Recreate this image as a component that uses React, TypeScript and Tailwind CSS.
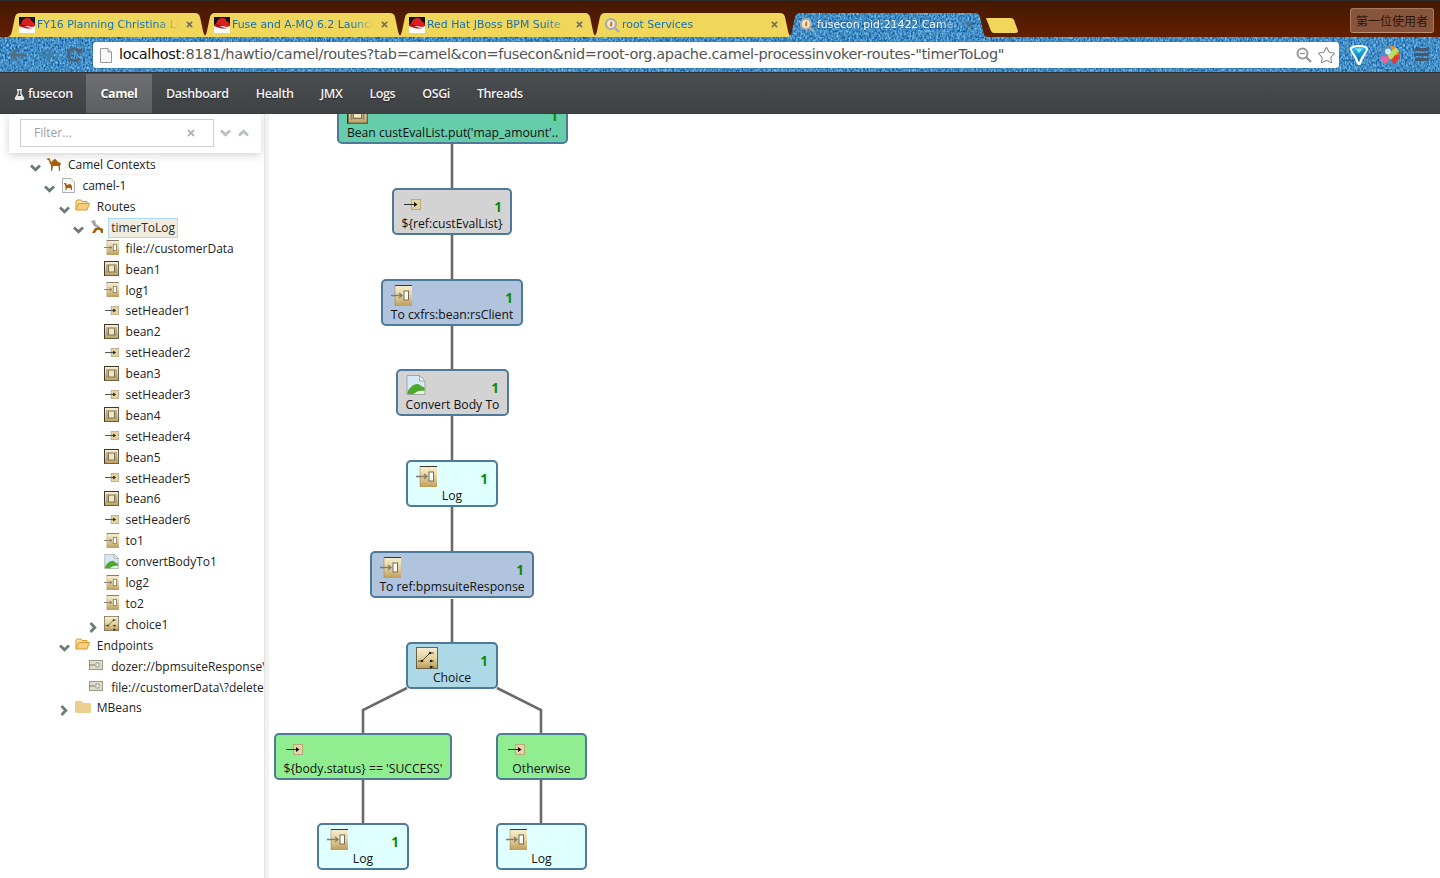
import { Star } from 'lucide-react'
import { FaFlask, FaFolder, FaTimes } from 'react-icons/fa'

// Shared gradient and texture defs, referenced by the icons below
function SharedDefs() {
  return (
    <svg className="absolute h-0 w-0">
      <defs>
        <linearGradient id="tan" x1="0" y1="0" x2="0" y2="1">
          <stop offset="0" stopColor="#f8f0d4" />
          <stop offset="0.55" stopColor="#e2cf98" />
          <stop offset="1" stopColor="#bd9c5a" />
        </linearGradient>
        <linearGradient id="jewel" x1="0" y1="0" x2="0" y2="1">
          <stop offset="0" stopColor="#25c4f2" />
          <stop offset="1" stopColor="#0a5fa6" />
        </linearGradient>
        <filter id="denim" x="0" y="0" width="100%" height="100%" colorInterpolationFilters="sRGB">
          <feTurbulence type="fractalNoise" baseFrequency="0.55 0.4" numOctaves="2" seed="4" />
          <feColorMatrix values="0.8 0 0 0 -0.14  0.7 0 0 0 0.2  0.5 0 0 0 0.52  0 0 0 0 1" />
        </filter>
      </defs>
    </svg>
  )
}

function Chevron({ dir, className = '' }: { dir: 'down' | 'right' | 'up'; className?: string }) {
  if (dir === 'right') {
    return (
      <svg width="8" height="11" viewBox="0 0 8 11" className={`shrink-0 ${className}`}>
        <path d="M1.500 1 L5.800 5.500 L1.500 10" fill="none" stroke="currentColor" strokeWidth="2.800" />
      </svg>
    )
  }
  return (
    <svg width="11" height="8" viewBox="0 0 11 8" className={`shrink-0 ${className}`}>
      <path d={dir === 'down' ? 'M1 1.500 L5.500 5.800 L10 1.500' : 'M1 6.500 L5.500 2.200 L10 6.500'} fill="none" stroke="currentColor" strokeWidth="2.800" />
    </svg>
  )
}

function RedHatFavicon() {
  return (
    <svg width="16" height="16" viewBox="0 0 16 16" className="shrink-0">
      <rect width="16" height="16" fill="#fff" />
      <rect width="16" height="9" fill="#111" />
      <path d="M2 7 C3 3 5 1 8 1 C11 1 12 2 12.500 4 C14 5 16 6 16 8 C16 10 13 10.500 10 9.500 C7 8.500 3 8 2 7 Z" fill="#dd1e1e" />
      <path d="M0 8 C1 6.500 2 7 3 8 C6 9.500 10 11 13 11 C10 12.500 4 11 0 9 Z" fill="#c01818" />
    </svg>
  )
}

function SearchFavicon() {
  return (
    <svg width="16" height="16" viewBox="0 0 16 16" className="shrink-0">
      <circle cx="7" cy="7" r="5" fill="#f3e9d8" stroke="#aaa" strokeWidth="2.200" />
      <path d="M11 11 L15 15" stroke="#aaa" strokeWidth="2.400" />
      <path d="M7.500 3.800 C8.500 6 9 7 7.500 9.800 C5.500 9.500 5 7.500 7.500 3.800 Z" fill="#e8741c" />
    </svg>
  )
}

function Tab({ title, favicon, active }: { title: string; favicon: 'hat' | 'search'; active?: boolean }) {
  const shape = 'M0 24 C4 24 5 22 6 18 L9 4 Q10 0 14 0 L189 0 Q193 0 194 4 L197 18 C198 22 199 24 203 24 Z'
  return (
    <div className="relative -ml-[8px] flex h-[24px] w-[203px] shrink-0 items-center pl-[13px] pr-[12px] first:ml-0">
      <svg viewBox="0 0 203 24" className="absolute inset-0 h-full w-full">
        {active ? (
          <>
            <clipPath id="activeTab">
              <path d={shape} />
            </clipPath>
            <rect width="203" height="24" filter="url(#denim)" clipPath="url(#activeTab)" />
          </>
        ) : (
          <path d={shape} fill="#f0d75c" />
        )}
      </svg>
      <div className="relative flex min-w-0 flex-1 items-center">
        {favicon === 'hat' ? <RedHatFavicon /> : <SearchFavicon />}
        <span
          className={`ml-[2px] min-w-0 flex-1 overflow-hidden whitespace-nowrap pt-[1px] text-[10.900px] [font-family:'DejaVu_Sans',sans-serif] [mask-image:linear-gradient(to_right,black_85%,transparent)] ${
            active ? 'text-white [text-shadow:0_0_2px_#1d5f90]' : 'text-[#1272b8]'
          }`}
        >
          {title}
        </span>
        <FaTimes size={9} className={`ml-[6px] mr-[3px] shrink-0 ${active ? 'text-[#4d6f8a]' : 'text-[#77705a]'}`} />
      </div>
    </div>
  )
}

function TabStrip() {
  return (
    <div className="flex h-[37px] items-end border-t border-[#2c2c2c] bg-gradient-to-b from-[#431800] to-[#631f00] pl-[6px]">
      <Tab title="FY16 Planning Christina Lin" favicon="hat" />
      <Tab title="Fuse and A-MQ 6.2 Launch" favicon="hat" />
      <Tab title="Red Hat JBoss BPM Suite ::" favicon="hat" />
      <Tab title="root Services" favicon="search" />
      <Tab title="fusecon pid:21422 Camel" favicon="search" active />
      <svg width="32" height="15" viewBox="0 0 32 15" className="mb-[4px] -ml-[3px] shrink-0">
        <path d="M0 0 L25 0 Q27 0 28 2 L32 13 Q32 15 29 15 L8 15 Q6 15 5 13 Z" fill="#f0d75c" />
      </svg>
      <div className="mb-[4px] ml-auto mr-[6px] flex h-[25px] w-[84px] items-center justify-center self-end rounded-[3px] border border-[#a97a62] border-b-[#c09078] bg-[#89543c] text-[12px] text-[#2a1509] [font-family:'Noto_Sans_CJK_TC',sans-serif]">
        第一位使用者
      </div>
    </div>
  )
}

function Toolbar() {
  return (
    <div className="relative flex h-[35px] items-center overflow-hidden pl-[10px]">
      <svg className="absolute inset-0 h-full w-full">
        <rect width="100%" height="100%" filter="url(#denim)" />
      </svg>
      <div className="relative flex items-center">
        <svg width="16" height="14" viewBox="0 0 16 14" className="mt-[1px]">
          <path d="M7 1.500 L2 7 L7 12.500 M2 7 L15 7" fill="none" stroke="#566d7e" strokeWidth="3" />
        </svg>
        <svg width="16" height="14" viewBox="0 0 16 14" className="ml-[12px] mt-[1px]">
          <path d="M9 1.500 L14 7 L9 12.500 M14 7 L1 7" fill="none" stroke="#3f7ea9" strokeWidth="3" />
        </svg>
        <svg width="17" height="16" viewBox="0 0 17 16" className="ml-[12px]">
          <path d="M13.500 11 A6 6 0 1 1 13 4" fill="none" stroke="#4f6475" strokeWidth="3" />
          <path d="M9.500 6.500 L16.500 6.500 L16.500 0 Z" fill="#4f6475" />
        </svg>
      </div>
      <div className="relative ml-[10px] mt-[1px] flex h-[26px] w-[1246px] items-center rounded-[3px] bg-white pl-[7px] pr-[3px] shadow-[0_0_1px_#17466a]">
        <svg width="12" height="15" viewBox="0 0 12 15" className="shrink-0">
          <path d="M0.500 0.500 L8 0.500 L11.500 4 L11.500 14.500 L0.500 14.500 Z" fill="#f7f7f7" stroke="#999" />
          <path d="M8 0.500 L8 4 L11.500 4" fill="#ddd" stroke="#999" />
        </svg>
        <span className="ml-[7px] whitespace-nowrap text-[14.500px] tracking-[-0.360px] text-[#555] [font-family:'DejaVu_Sans',sans-serif]">
          <span className="text-[#111]">localhost</span>:8181/hawtio/camel/routes?tab=camel&amp;con=fusecon&amp;nid=root-org.apache.camel-processinvoker-routes-"timerToLog"
        </span>
        <div className="ml-auto flex items-center gap-[5px]">
          <svg width="16" height="16" viewBox="0 0 16 16">
            <circle cx="6.500" cy="6.500" r="5" fill="none" stroke="#999" strokeWidth="2" />
            <path d="M4 6.500 L9 6.500" stroke="#999" strokeWidth="1.500" />
            <path d="M10.500 10.500 L15 15" stroke="#999" strokeWidth="2.400" />
          </svg>
          <Star size={19} strokeWidth={1.300} className="text-[#888]" />
        </div>
      </div>
      <div className="relative flex items-center">
        <svg width="20" height="22" viewBox="0 0 20 22" className="ml-[10px]">
          <path d="M1 5 C1 2 5 1 10 1 C15 1 19 2 19 5 C19 8 14 13 12 20 C11 21.500 9 21.500 8 20 C6 13 1 8 1 5 Z" fill="#fff" />
          <path d="M3 5.500 C3 3.500 7 3 10 3 C13 3 17 3.500 17 5.500 C16.500 8 12 12 10 18.500 C8 12 3.500 8 3 5.500 Z" fill="url(#jewel)" />
          <path d="M6 4.500 L14 4.500 L10 9 Z" fill="#8fe6fb" />
        </svg>
        <svg width="20" height="20" viewBox="0 0 20 20" className="ml-[11px]">
          <circle cx="10" cy="10" r="9.500" fill="#4f8fc4" />
          <path d="M10 0.500 A9.500 9.500 0 0 1 19.500 10 L14 10 Z" fill="#f0901e" />
          <path d="M19.500 9 A9.500 9.500 0 0 1 13 19 L11 12 Z" fill="#e03a30" />
          <path d="M8 9 L16 2.500 L18.500 5.500 L12 14 L8 14 Z" fill="#b4e068" />
          <circle cx="8" cy="6.500" r="3" fill="#cfe8f5" />
          <path d="M1 13 C1 10.500 4 10.500 5 12 C6 10.500 9 10.500 9 13 C9 16 6 18 5 19 C4 18 1 16 1 13 Z" fill="#f0609a" />
        </svg>
        <div className="ml-[15px] flex flex-col gap-[2px]">
          <span className="block h-[3px] w-[14px] rounded-[1px] bg-[#46586a]" />
          <span className="block h-[3px] w-[14px] rounded-[1px] bg-[#46586a]" />
          <span className="block h-[3px] w-[14px] rounded-[1px] bg-[#46586a]" />
        </div>
      </div>
    </div>
  )
}

function NavBar() {
  const items = ['Dashboard', 'Health', 'JMX', 'Logs', 'OSGi', 'Threads']
  return (
    <div className="flex h-[42px] items-stretch border-y border-t-[#2e3032] border-b-[#3a3c3f] bg-gradient-to-b from-[#4b4e51] to-[#3f4245] text-[12.500px] font-semibold tracking-[-0.400px] text-[#f2f2f2] [text-shadow:0_1px_1px_#222]">
      <div className="mt-[2px] flex w-[86px] items-center gap-[3px] pl-[14px]">
        <FaFlask size={11} className="text-[#e8e8e8]" />
        fusecon
      </div>
      <div className="mt-[1px] flex w-[66px] items-center justify-center bg-gradient-to-b from-[#6e7073] to-[#5c5f62] pt-[1px] font-bold text-white">Camel</div>
      <div className="mt-[2px] flex items-center gap-[27px] pl-[14px]">
        {items.map((item) => (
          <span key={item}>{item}</span>
        ))}
      </div>
    </div>
  )
}

// Tree icons

function ToIcon({ size = 15 }: { size?: number }) {
  return (
    <svg width={size} height={size} viewBox="0 0 21 21" className="shrink-0">
      <rect x="4" y="0" width="17" height="21" fill="url(#tan)" />
      <path d="M4 0.500 L21 0.500" stroke="#3d3526" />
      <path d="M4 0 L4 21" stroke="#8d7b53" strokeOpacity="0.500" />
      <path d="M0 10.500 L11 10.500 M8 8 L11 10.500 L8 13" fill="none" stroke="#857a68" strokeWidth="1.300" />
      <rect x="13" y="6" width="4.500" height="9" fill="#fff" stroke="#746a55" />
    </svg>
  )
}

function BeanIcon({ size = 15 }: { size?: number }) {
  return (
    <svg width={size} height={size} viewBox="0 0 15 15" className="shrink-0">
      <rect x="0.500" y="0.500" width="14" height="14" fill="url(#tan)" stroke="#6b6146" />
      <path d="M0.500 14.500 L0.500 0.500 L14.500 0.500" fill="none" stroke="#3d3526" />
      <rect x="4.500" y="4" width="6" height="7" fill="#efe6c4" stroke="#7d7358" />
      <path d="M3 3 L3 12 M12 3 L12 12" stroke="#8d8268" />
    </svg>
  )
}

function SmallIcon({ className = '' }: { className?: string }) {
  return (
    <svg width="17" height="11" viewBox="0 0 17 11" className={`shrink-0 ${className}`}>
      <rect x="7.500" y="0.500" width="9" height="10" fill="#e4d4a4" stroke="#b9a97f" />
      <path d="M0 5.500 L11 5.500" stroke="#333" />
      <path d="M10 3 L13.500 5.500 L10 8 Z" fill="#111" />
    </svg>
  )
}

function TreeSmallIcon() {
  return (
    <svg width="14" height="9" viewBox="0 0 17 11" className="ml-[1px] shrink-0">
      <rect x="7.500" y="0.500" width="9" height="10" fill="#e4d4a4" stroke="#b9a97f" />
      <path d="M0 5.500 L11 5.500" stroke="#555" strokeWidth="1.300" />
      <path d="M10 3 L13.500 5.500 L10 8 Z" fill="#222" />
    </svg>
  )
}

function ImageIcon({ size = 15 }: { size?: number }) {
  return (
    <svg width={size} height={size} viewBox="0 0 19 20" className="shrink-0">
      <path d="M0.500 0.500 L13 0.500 L18.500 6 L18.500 19.500 L0.500 19.500 Z" fill="#d6e8f6" stroke="#a5a5a5" />
      <path d="M13 0.500 L13 6 L18.500 6 Z" fill="#f2f2f2" stroke="#a5a5a5" />
      <path d="M1 19 L1 17 C4 11 9 8 12.500 9.500 C15 11 16 12 18 12.500 L18 19 Z" fill="#4fa82e" />
      <path d="M7 19 C10 16 14 15 18 16 L18 19 Z" fill="#e8f3de" />
    </svg>
  )
}

function ChoiceIcon({ size = 15 }: { size?: number }) {
  return (
    <svg width={size} height={size} viewBox="0 0 22 22" className="shrink-0">
      <rect x="0.500" y="0.500" width="21" height="21" fill="url(#tan)" stroke="#6b6048" />
      <path d="M2 14 L6 14 L14 6 L18 6 M14 14 L18 14 M14 20 L18 20" fill="none" stroke="#4d4636" />
      <circle cx="6" cy="14" r="1.300" fill="#222" />
      <circle cx="14" cy="6" r="1.300" fill="#222" />
      <circle cx="15" cy="14" r="1.300" fill="#222" />
      <circle cx="15" cy="20" r="1.300" fill="#222" />
    </svg>
  )
}

function CamelIcon() {
  return (
    <svg width="16" height="14" viewBox="0 0 16 14" className="shrink-0">
      <path d="M0 2 L3 1 L4 2 L5 5 C6 5 7 2 9 2 C10 2 11 4 12 5 C14 5 15 6 15 8 L14 7.500 L14 14 L13 14 L12.500 9 L7 9 L6 14 L5 14 L5 8 C3.500 7 3.500 4 2.500 3 Z" fill="#a3600e" />
    </svg>
  )
}

function ContextIcon() {
  return (
    <svg width="13" height="15" viewBox="0 0 13 15" className="ml-[2px] shrink-0">
      <path d="M0.500 0.500 L9 0.500 L12.500 4 L12.500 14.500 L0.500 14.500 Z" fill="#f8f8f8" stroke="#b0b0b0" />
      <path d="M2 5 L4 5 L5 7 C6 7 7 5.500 8 6 C9 7 10 7 10 9 L10 12 L9 12 L8.500 10 L5 10 L4.500 12 L3.500 12 L3.500 9 C3 8 3 6 2 5.500 Z" fill="#a3600e" />
    </svg>
  )
}

function RouteIcon() {
  return (
    <svg width="14" height="14" viewBox="0 0 14 14" className="ml-[1px] shrink-0">
      <path d="M1 1 L5 0 L6 4 L10 7 L8 8 L4 6 Z" fill="#a5a5a5" />
      <path d="M2 13 L5 8 L9 7 L13 9 L13 13 L11 13 L10 10 L7 10 L5 13 Z" fill="#a3600e" />
    </svg>
  )
}

function OpenFolderIcon() {
  return (
    <svg width="15" height="12" viewBox="0 0 15 12" className="mb-[2px] shrink-0">
      <path d="M1 11 L1 2 L2 1 L6 1 L7 2.500 L12 2.500 L12 4.500" fill="#f9e2a8" stroke="#d99a2a" />
      <path d="M1 11 L3.500 4.500 L14.500 4.500 L12 11 Z" fill="#f6cf7e" stroke="#d99a2a" />
    </svg>
  )
}

function EndpointIcon() {
  return (
    <svg width="14" height="10" viewBox="0 0 14 10" className="mb-[1px] shrink-0">
      <rect x="0.500" y="0.500" width="13" height="9" fill="#e3dcc4" stroke="#9b9b8c" />
      <path d="M0 5 L6 5" stroke="#777" />
      <rect x="7" y="3" width="3" height="4" fill="#fff" stroke="#777" strokeWidth="0.700" />
    </svg>
  )
}

type TreeItem = {
  label: string
  pad: string
  icon: React.ReactNode
  open?: boolean
  closed?: boolean
  selected?: boolean
  outlined?: boolean
}

const leaf = 'pl-[86.600px]'

const tree: TreeItem[] = [
  { label: 'Camel Contexts', pad: 'pl-[29px]', icon: <CamelIcon />, open: true, outlined: true },
  { label: 'camel-1', pad: 'pl-[43.400px]', icon: <ContextIcon />, open: true },
  { label: 'Routes', pad: 'pl-[57.800px]', icon: <OpenFolderIcon />, open: true },
  { label: 'timerToLog', pad: 'pl-[72.200px]', icon: <RouteIcon />, open: true, selected: true },
  { label: 'file://customerData', pad: leaf, icon: <ToIcon /> },
  { label: 'bean1', pad: leaf, icon: <BeanIcon /> },
  { label: 'log1', pad: leaf, icon: <ToIcon /> },
  { label: 'setHeader1', pad: leaf, icon: <TreeSmallIcon /> },
  { label: 'bean2', pad: leaf, icon: <BeanIcon /> },
  { label: 'setHeader2', pad: leaf, icon: <TreeSmallIcon /> },
  { label: 'bean3', pad: leaf, icon: <BeanIcon /> },
  { label: 'setHeader3', pad: leaf, icon: <TreeSmallIcon /> },
  { label: 'bean4', pad: leaf, icon: <BeanIcon /> },
  { label: 'setHeader4', pad: leaf, icon: <TreeSmallIcon /> },
  { label: 'bean5', pad: leaf, icon: <BeanIcon /> },
  { label: 'setHeader5', pad: leaf, icon: <TreeSmallIcon /> },
  { label: 'bean6', pad: leaf, icon: <BeanIcon /> },
  { label: 'setHeader6', pad: leaf, icon: <TreeSmallIcon /> },
  { label: 'to1', pad: leaf, icon: <ToIcon /> },
  { label: 'convertBodyTo1', pad: leaf, icon: <ImageIcon /> },
  { label: 'log2', pad: leaf, icon: <ToIcon /> },
  { label: 'to2', pad: leaf, icon: <ToIcon /> },
  { label: 'choice1', pad: leaf, icon: <ChoiceIcon />, closed: true },
  { label: 'Endpoints', pad: 'pl-[57.800px]', icon: <OpenFolderIcon />, open: true },
  { label: 'dozer://bpmsuiteResponse\\?mappingFile=transformation.xml', pad: 'pl-[72.200px]', icon: <EndpointIcon /> },
  { label: 'file://customerData\\?delete=true', pad: 'pl-[72.200px]', icon: <EndpointIcon /> },
  { label: 'MBeans', pad: 'pl-[57.800px]', icon: <FaFolder size={16} className="shrink-0 text-[#eccf90]" />, closed: true },
]

function TreeRow({ item }: { item: TreeItem }) {
  return (
    <div className={`flex h-[20.900px] items-center whitespace-nowrap ${item.pad}`}>
      <span className="flex w-[17px] shrink-0 items-center pt-[5px] text-[#6b7b78]">
        {item.open && <Chevron dir="down" className="ml-[1px]" />}
        {item.closed && <Chevron dir="right" className="ml-[2px]" />}
      </span>
      <span className="mb-[2px] flex w-[20px] shrink-0 items-center">{item.icon}</span>
      <span
        className={
          item.selected
            ? '-ml-[1px] border border-[#a9dcf3] bg-[#f1ece0] px-[2px] text-[#2c2c2c]'
            : item.outlined
              ? '-ml-[1px] border border-[#f1f1f1] px-[2px] text-[#222]'
              : 'ml-[2px] text-[#222]'
        }
      >
        {item.label}
      </span>
    </div>
  )
}

function Sidebar() {
  return (
    <div className="flex h-full w-[269px] shrink-0 overflow-hidden border-r-[4px] border-r-[#f1f1f1] pr-[1px] shadow-[inset_-1px_0_0_#e2e2e2]">
      <div className="w-[264px] overflow-hidden">
        <div className="ml-[9px] flex h-[39px] w-[252px] items-center bg-white pb-[1px] pl-[11px] shadow-[0_2px_8px_rgba(0,0,0,0.18)]">
          <div className="flex h-[28px] w-[194px] items-center justify-between border border-[#cfcfcf] pl-[13px] pr-[17px] text-[12px] text-[#a0a0a0]">
            Filter...
            <FaTimes size={10} className="text-[#b0b0b0]" />
          </div>
          <Chevron dir="down" className="ml-[6px] text-[#b8bfbf]" />
          <Chevron dir="up" className="ml-[7px] text-[#b8bfbf]" />
        </div>
        <div className="pt-[1.800px] text-[12px] [font-family:'Open_Sans',sans-serif]">
          {tree.map((item) => (
            <TreeRow key={item.label} item={item} />
          ))}
        </div>
      </div>
    </div>
  )
}

type DiagramNode = {
  label: string
  box: string
  icon: React.ReactNode
  count?: boolean
}

const nodes: DiagramNode[] = [
  { label: "Bean custEvalList.put('map_amount'..", box: 'left-[68px] top-[-17px] w-[231px] bg-[#66cdaa]', icon: <BeanIcon size={21} />, count: true },
  { label: '${ref:custEvalList}', box: 'left-[123px] top-[74px] w-[120px] bg-[#d3d3d3]', icon: <SmallIcon className="ml-[2px]" />, count: true },
  { label: 'To cxfrs:bean:rsClient', box: 'left-[112px] top-[165px] w-[142px] bg-[#b0c4de]', icon: <ToIcon size={21} />, count: true },
  { label: 'Convert Body To', box: 'left-[127px] top-[255px] w-[113px] bg-[#d3d3d3]', icon: <ImageIcon size={20} />, count: true },
  { label: 'Log', box: 'left-[137px] top-[346px] w-[92px] bg-[#e0ffff]', icon: <ToIcon size={21} />, count: true },
  { label: 'To ref:bpmsuiteResponse', box: 'left-[101px] top-[437px] w-[164px] bg-[#b0c4de]', icon: <ToIcon size={21} />, count: true },
  { label: 'Choice', box: 'left-[137px] top-[528px] w-[92px] bg-[#add8e6]', icon: <ChoiceIcon size={22} />, count: true },
  { label: "${body.status} == 'SUCCESS'", box: 'left-[5px] top-[619px] w-[178px] bg-[#90ee90]', icon: <SmallIcon className="ml-[2px]" /> },
  { label: 'Otherwise', box: 'left-[227px] top-[619px] w-[91px] bg-[#90ee90]', icon: <SmallIcon className="ml-[2px]" /> },
  { label: 'Log', box: 'left-[48px] top-[709px] w-[92px] bg-[#e0ffff]', icon: <ToIcon size={21} />, count: true },
  { label: 'Log', box: 'left-[227px] top-[709px] w-[91px] bg-[#e0ffff]', icon: <ToIcon size={21} /> },
]

function Node({ node }: { node: DiagramNode }) {
  return (
    <div className={`absolute flex h-[47px] flex-col rounded-[5px] border-2 border-[#4d7a9a] text-[12.200px] text-[#111] ${node.box}`}>
      <div className="flex h-[26px] shrink-0 items-center justify-between pl-[8px] pr-[8px] pt-[2px]">
        {node.icon}
        {node.count && <span className="pt-[5px] text-[13.500px] font-bold leading-[16px] text-[#0a8a0a]">1</span>}
      </div>
      <div className="whitespace-nowrap text-center leading-[16px]">{node.label}</div>
    </div>
  )
}

function Diagram() {
  return (
    <div className="relative h-full flex-1 overflow-hidden bg-white [font-family:'Open_Sans',sans-serif]">
      {/* edges use page coordinates through the viewBox offset */}
      <svg viewBox="269 114 1171 764" className="absolute inset-0 h-full w-full">
        <path
          d="M452 144 L452 551 M452 599 L452 642 M407 688 L363 710 L363 733 M497 688 L541 710 L541 733 M363 780 L363 823 M541 780 L541 823"
          fill="none"
          stroke="#6a6a6a"
          strokeWidth="2.600"
        />
      </svg>
      {nodes.map((node) => (
        <Node key={node.box} node={node} />
      ))}
    </div>
  )
}

export default function App() {
  return (
    <div className="relative flex h-[878px] w-[1440px] flex-col overflow-hidden bg-white [font-family:'Open_Sans',sans-serif]">
      <SharedDefs />
      <TabStrip />
      <Toolbar />
      <NavBar />
      <div className="flex min-h-0 flex-1">
        <Sidebar />
        <Diagram />
      </div>
    </div>
  )
}
